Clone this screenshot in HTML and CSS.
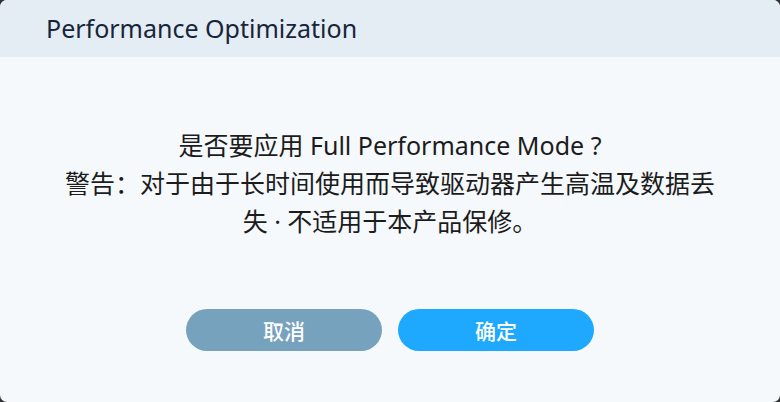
FILE: index.html
```html
<!DOCTYPE html>
<html>
<head>
<meta charset="utf-8">
<title>Performance Optimization</title>
<link rel="stylesheet" href="styles.css">
</head>
<body>
<div class="dialog">
	<div class="dialog-head">Performance Optimization</div>
	<div class="dialog-body">
		<p class="msg">是否要应用 Full Performance Mode ?<br>警告：对于由于长时间使用而导致驱动器产生高温及数据丢失 · 不适用于本产品保修。</p>
		<div class="btns">
			<button class="btn cancel">取消</button>
			<button class="btn ok">确定</button>
		</div>
	</div>
</div>
</body>
</html>
```
FILE: styles.css
```css
html,body{
	margin:0;
	padding:0;
	background:#2f3133;
}
body{
	width:780px;
	height:402px;
	font-family:"Noto Sans","Noto Sans CJK SC",sans-serif;
}
.dialog{
	width:780px;
	height:402px;
	border-radius:7px;
	overflow:hidden;
	background:#f5f9fc;
	display:flex;
	flex-direction:column;
}
.dialog-head{
	height:57px;
	background:#e4ecf4;
	color:#17253a;
	font-size:25px;
	line-height:57px;
	padding-left:46px;
}
.dialog-body{
	flex:1;
	display:flex;
	flex-direction:column;
	align-items:center;
}
.msg{
	width:660px;
	margin:69px 0 0;
	text-align:center;
	font-size:25px;
	line-height:38px;
	color:#1c1c1c;
}
.btns{
	display:flex;
	gap:16px;
	margin-top:69px;
}
.btn{
	width:196px;
	height:42px;
	border:0;
	border-radius:21px;
	color:#fff;
	font-family:"Noto Sans CJK SC",sans-serif;
	font-size:21px;
	font-weight:500;
	cursor:pointer;
}
.cancel{
	background:#77a2be;
}
.ok{
	background:#1ea9ff;
}
```
